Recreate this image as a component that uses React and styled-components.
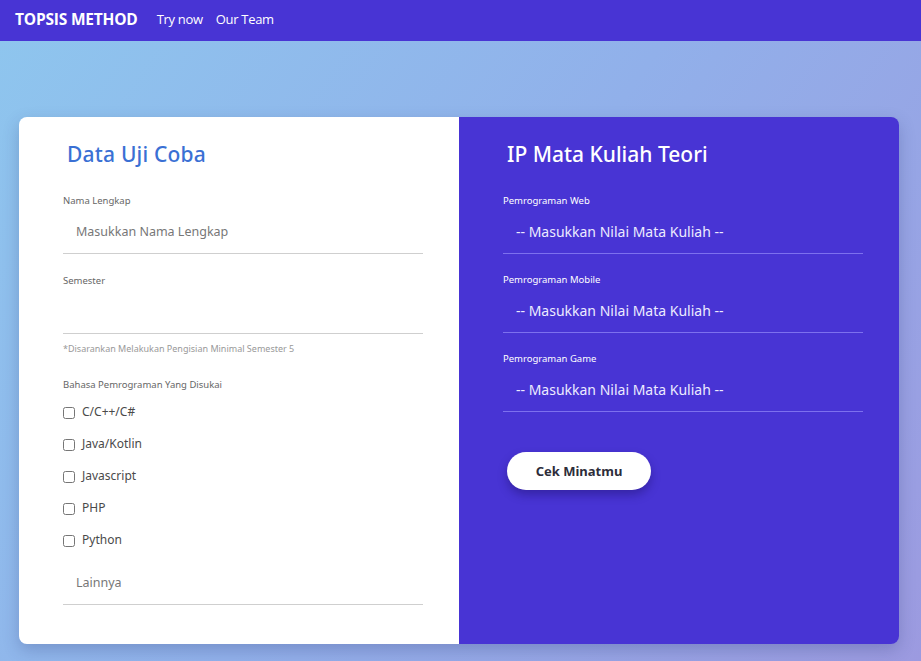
import React from "react";
import styled, { createGlobalStyle } from "styled-components";

const Global = createGlobalStyle`
  html, body { margin: 0; padding: 0; }
  body { font-family: "Noto Sans", "Open Sans", sans-serif; }
  * { box-sizing: border-box; }
`;

const Page = styled.div`
  min-height: 100vh;
  background: linear-gradient(125deg, #8ec6ee 0%, #91b0ea 50%, #9c9ae0 100%);
  overflow: hidden;
`;

const Nav = styled.nav`
  height: 41px;
  background: #4834d4;
  display: flex;
  align-items: center;
  padding: 0 15px 3px;
  font-family: "Open Sans", "Noto Sans", sans-serif;
  color: #fff;
`;

const Brand = styled.div`
  font-weight: 700;
  font-size: 15.5px;
  margin-right: 19px;
  letter-spacing: -0.2px;
`;

const NavLink = styled.a`
  color: #fff;
  font-size: 13px;
  text-decoration: none;
  margin-right: 13px;
  letter-spacing: -0.3px;
`;

const Main = styled.main`
  margin: 76px 22px 17px 19px;
`;

const Card = styled.div`
  display: grid;
  grid-template-columns: 1fr 1fr;
  height: 527px;
  border-radius: 8px;
  overflow: hidden;
  box-shadow: 0 6px 16px rgba(40, 50, 110, 0.25);
`;

const Panel = styled.section`
  background: ${(p) => (p.$dark ? "#4834d4" : "#fff")};
  padding: 24px 36px 0 44px;
  display: flex;
  flex-direction: column;
`;

const Title = styled.h2`
  margin: 0 0 28px 4px;
  font-weight: 500;
  font-size: 21px;
  line-height: 26px;
  letter-spacing: ${(p) => (p.$dark ? "0" : "0.2px")};
  color: ${(p) => (p.$dark ? "#fff" : "#3a70d4")};
`;

const Field = styled.div`
  display: flex;
  flex-direction: column;
  margin-bottom: ${(p) => p.$mb ?? 21}px;
`;

const Label = styled.label`
  font-size: 9.5px;
  line-height: 12px;
  color: ${(p) => (p.$dark ? "#fff" : "#666")};
`;

const Input = styled.input`
  margin-top: ${(p) => p.$mt ?? 4}px;
  height: 43px;
  border: none;
  border-bottom: 1px solid ${(p) => (p.$dark ? "#7d70ee" : "#cfcfcf")};
  background: transparent;
  padding: 0 13px 1px;
  font-family: inherit;
  font-size: ${(p) => (p.$dark ? "14px" : "12.5px")};
  color: ${(p) => (p.$dark ? "#fff" : "#555")};
  outline: none;
  &::placeholder {
    color: ${(p) => (p.$dark ? "#ecebff" : "#777")};
  }
`;

const Hint = styled.div`
  font-size: 9px;
  line-height: 12px;
  color: #999;
  margin-top: -12px;
  margin-bottom: 24px;
`;

const CheckList = styled.div`
  display: flex;
  flex-direction: column;
  margin-top: 4px;
`;

const CheckRow = styled.label`
  height: 32px;
  display: flex;
  align-items: center;
  gap: 7px;
  font-size: 12px;
  color: #4a4a4a;
`;

const Box = styled.input`
  width: 12px;
  height: 12px;
  margin: 3px 0 0 0;
  accent-color: #4834d4;
`;

const Button = styled.button`
  margin: 20px 0 0 4px;
  width: 144px;
  height: 38px;
  border: none;
  border-radius: 19px;
  background: #fff;
  color: #2d2d3a;
  font-family: inherit;
  font-weight: 700;
  font-size: 13px;
  box-shadow: 0 5px 10px rgba(20, 10, 80, 0.35);
  cursor: pointer;
`;

const languages = ["C/C++/C#", "Java/Kotlin", "Javascript", "PHP", "Python"];
const courses = ["Pemrograman Web", "Pemrograman Mobile", "Pemrograman Game"];

export default function App() {
  return (
    <Page>
      <Global />
      <Nav>
        <Brand>TOPSIS METHOD</Brand>
        <NavLink href="#">Try now</NavLink>
        <NavLink href="#">Our Team</NavLink>
      </Nav>
      <Main>
        <Card>
          <Panel>
            <Title>Data Uji Coba</Title>
            <Field>
              <Label>Nama Lengkap</Label>
              <Input placeholder="Masukkan Nama Lengkap" />
            </Field>
            <Field>
              <Label>Semester</Label>
              <Input />
            </Field>
            <Hint>*Disarankan Melakukan Pengisian Minimal Semester 5</Hint>
            <Field $mb={0}>
              <Label>Bahasa Pemrograman Yang Disukai</Label>
              <CheckList>
                {languages.map((l) => (
                  <CheckRow key={l}>
                    <Box type="checkbox" />
                    {l}
                  </CheckRow>
                ))}
              </CheckList>
              <Input $mt={7} placeholder="Lainnya" />
            </Field>
          </Panel>
          <Panel $dark>
            <Title $dark>IP Mata Kuliah Teori</Title>
            {courses.map((c) => (
              <Field key={c} $mb={20}>
                <Label $dark>{c}</Label>
                <Input $dark placeholder="-- Masukkan Nilai Mata Kuliah --" />
              </Field>
            ))}
            <div>
              <Button>Cek Minatmu</Button>
            </div>
          </Panel>
        </Card>
      </Main>
    </Page>
  );
}
